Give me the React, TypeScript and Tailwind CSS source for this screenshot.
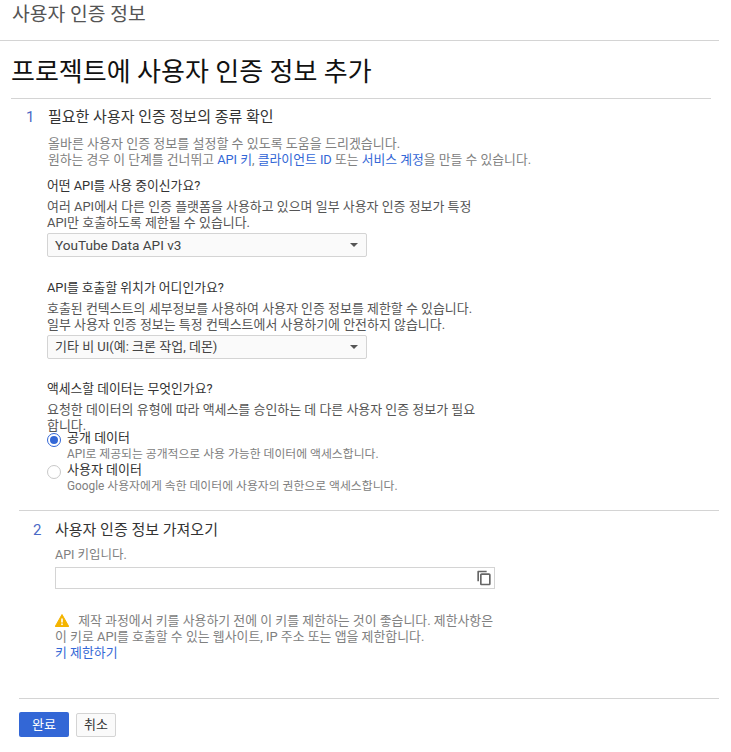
import React from "react";

const font = "[font-family:Roboto,'Noto_Sans_CJK_KR',sans-serif]";

function Select({ label, size }: { label: string; size: string }) {
  return (
    <div className={"mt-[2px] flex h-[24px] w-[320px] items-center justify-between rounded-[2px] border border-[#d4d4d4] bg-[#fafafa] pl-[7px] pr-[8px] text-[#444] " + size}>
      <span>{label}</span>
      <span className="h-0 w-0 border-x-[4px] border-t-[4px] border-x-transparent border-t-[#555]" />
    </div>
  );
}

function Radio({ checked, title, desc }: { checked?: boolean; title: string; desc: string }) {
  return (
    <div className="flex h-[32px] gap-[6px]">
      <span className={"mt-[2px] flex h-[14px] w-[14px] shrink-0 items-center justify-center rounded-full border " + (checked ? "border-[#3367d6]" : "border-[#c8c8c8]")}>
        {checked && <span className="h-[8px] w-[8px] rounded-full bg-[#3367d6]" />}
      </span>
      <div className="-mt-px">
        <div className="text-[13px] leading-[16px] text-[#333]">{title}</div>
        <div className="text-[11.850px] leading-[16px] text-[#808080]">{desc}</div>
      </div>
    </div>
  );
}

export default function App() {
  return (
    <div className={font + " h-[752px] w-[731px] overflow-hidden bg-white"}>
      <div className="h-[41px] w-[719px] border-b border-[#d4d4d4] pl-[12px] pt-[2px] text-[19.300px] leading-[26px] text-[#555]">
        사용자 인증 정보
      </div>
      <div className="ml-[11px] h-[58px] w-[700px] border-b border-[#d4d4d4] pt-[15px] text-[26px] leading-[32px] text-[#111]">
        프로젝트에 사용자 인증 정보 추가
      </div>

      <div className="ml-[19px] h-[412px] w-[700px] border-b border-[#d4d4d4] pt-[8px]">
        <div className="flex items-center text-[15px] leading-[20px]">
          <span className="w-[29px] pl-[7px] text-[#4a69c6]">1</span>
          <span className="text-[#333]">필요한 사용자 인증 정보의 종류 확인</span>
        </div>
        <div className="ml-[28px] w-[640px]">
          <div className="mt-[9px] pl-px text-[13px] leading-[16px] text-[#808080]">
            <div>올바른 사용자 인증 정보를 설정할 수 있도록 도움을 드리겠습니다.</div>
            <div className="text-[12.820px]">
              원하는 경우 이 단계를 건너뛰고 <span className="text-[#3367d6]">API 키</span>,{" "}
              <span className="text-[#3367d6]">클라이언트 ID</span> 또는{" "}
              <span className="text-[#3367d6]">서비스 계정</span>을 만들 수 있습니다.
            </div>
          </div>

          <div className="mt-[10px] text-[12.800px] leading-[16px] text-[#333]">어떤 API를 사용 중이신가요?</div>
          <div className="mt-[5px] w-[432px] text-[12.950px] leading-[16px] text-[#555]">
            여러 API에서 다른 인증 플랫폼을 사용하고 있으며 일부 사용자 인증 정보가 특정 API만 호출하도록 제한될 수 있습니다.
          </div>
          <Select label="YouTube Data API v3" size="text-[13.600px]" />

          <div className="mt-[23px] text-[12.800px] leading-[16px] text-[#333]">API를 호출할 위치가 어디인가요?</div>
          <div className="mt-[5px] text-[12.950px] leading-[16px] text-[#555]">
            <div>호출된 컨텍스트의 세부정보를 사용하여 사용자 인증 정보를 제한할 수 있습니다.</div>
            <div>일부 사용자 인증 정보는 특정 컨텍스트에서 사용하기에 안전하지 않습니다.</div>
          </div>
          <Select label="기타 비 UI(예: 크론 작업, 데몬)" size="text-[13px]" />

          <div className="mt-[22px] text-[12.800px] leading-[16px] text-[#333]">액세스할 데이터는 무엇인가요?</div>
          <div className="mt-[5px] w-[432px] text-[12.950px] leading-[16px] text-[#555]">
            요청한 데이터의 유형에 따라 액세스를 승인하는 데 다른 사용자 인증 정보가 필요합니다.
          </div>
          <div className="-mt-[3px]">
            <Radio checked title="공개 데이터" desc="API로 제공되는 공개적으로 사용 가능한 데이터에 액세스합니다." />
            <Radio title="사용자 데이터" desc="Google 사용자에게 속한 데이터에 사용자의 권한으로 액세스합니다." />
          </div>
        </div>
      </div>

      <div className="ml-[19px] h-[188px] w-[700px] border-b border-[#d4d4d4] pt-[9px]">
        <div className="flex items-center text-[15px] leading-[20px]">
          <span className="w-[36px] pl-[14px] text-[#4a69c6]">2</span>
          <span className="text-[#333]">사용자 인증 정보 가져오기</span>
        </div>
        <div className="ml-[36px] w-[440px]">
          <div className="mt-[7px] text-[12.500px] leading-[16px] text-[#808080]">API 키입니다.</div>
          <div className="mt-[4px] flex h-[22px] items-center justify-end border border-[#d4d4d4] pr-[2px]">
            <svg width="16" height="16" viewBox="0 0 24 24" fill="#666">
              <path d="M16 1H3.500C2.700 1 2 1.700 2 2.500V17h2.500V3.500H16V1zM19.500 5H8.500C7.100 5 6 6.100 6 7.500v13C6 21.900 7.100 23 8.500 23h11c1.400 0 2.500-1.100 2.500-2.500v-13C22 6.100 20.900 5 19.500 5zm0 15.500h-11v-13h11v13z" />
            </svg>
          </div>
          <div className="mt-[24px] whitespace-nowrap text-[12.900px] leading-[16px] text-[#808080]">
            <svg className="mr-[6px] inline-block align-[-2px]" width="14" height="13" viewBox="0 0 14 13" fill="none">
              <path d="M7 0.500L13.800 12.500H0.200L7 0.500Z" fill="#f4b400" stroke="#f4b400" strokeLinejoin="round" />
              <rect x="6.200" y="4.500" width="1.600" height="4" fill="#fff" />
              <rect x="6.200" y="9.500" width="1.600" height="1.600" fill="#fff" />
            </svg>
            {" "}제작 과정에서 키를 사용하기 전에 이 키를 제한하는 것이 좋습니다. 제한사항은
            <br />
            이 키로 API를 호출할 수 있는 웹사이트, IP 주소 또는 앱을 제한합니다.
            <div className="text-[#3367d6]">키 제한하기</div>
          </div>
        </div>
      </div>

      <div className="ml-[19px] mt-[13px] flex items-center gap-[7px] text-[13px]">
        <div className="flex h-[25px] w-[50px] items-center justify-center rounded-[2px] bg-[#3367d6] text-white">완료</div>
        <div className="flex h-[24px] w-[40px] items-center justify-center rounded-[2px] border border-[#d4d4d4] bg-[#fafafa] text-[#333]">취소</div>
      </div>
    </div>
  );
}
